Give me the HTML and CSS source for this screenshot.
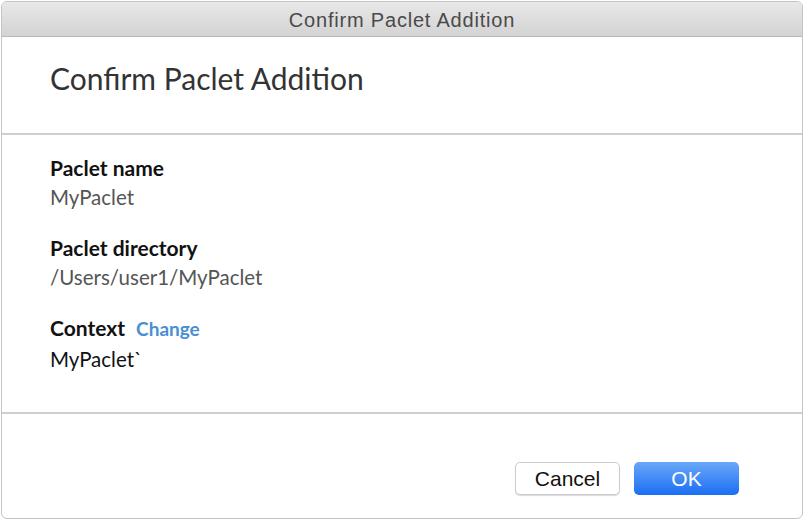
FILE: index.html
```html
<!DOCTYPE html>
<html lang="en">
<head>
  <meta charset="UTF-8">
  <meta name="viewport" content="width=device-width, initial-scale=1.0">
  <title>Confirm Paclet Addition</title>
  <link rel="stylesheet" href="styles.css">
</head>
<body>
  <div class="window">
    <!-- Barre de titre -->
    <div class="titlebar">Confirm Paclet Addition</div>

    <div class="header">
      <h1>Confirm Paclet Addition</h1>
    </div>

    <div class="content">
      <div class="field">
        <div class="label">Paclet name</div>
        <div class="value">MyPaclet</div>
      </div>
      <div class="field">
        <div class="label">Paclet directory</div>
        <div class="value">/Users/user1/MyPaclet</div>
      </div>
      <div class="field last">
        <div class="label">Context <a class="change" href="#">Change</a></div>
        <div class="value dark">MyPaclet`</div>
      </div>
    </div>

    <div class="footer">
      <button class="btn cancel">Cancel</button>
      <button class="btn ok">OK</button>
    </div>
  </div>
</body>
</html>
```

FILE: styles.css
```css
body {
  margin: 0;
  background-color: white;
  font-family: Lato, "Open Sans", sans-serif;
}

.window {
  width: 800px;
  height: 516px;
  margin-left: 1px;
  margin-top: 1px;
  border: 1.5px solid #c4c4c4;
  border-radius: 6px;
  overflow: hidden;
  display: flex;
  flex-direction: column;
}

.titlebar {
  height: 34px;
  line-height: 36px;
  text-align: center;
  font-family: "Liberation Sans", sans-serif;
  font-size: 20px;
  letter-spacing: 0.8px;
  color: #4a4a4a;
  background: linear-gradient(#e8e8e8, #d3d3d3);
  border-bottom: 1px solid #b9b9b9;
}

.header {
  height: 96px;
  border-bottom: 2px solid #cfcfcf;
  padding-left: 48px;
}

.header h1 {
  margin: 0;
  padding-top: 23px;
  font-size: 30px;
  font-weight: normal;
  color: #333;
}

.content {
  height: 279px;
  border-bottom: 2px solid #cfcfcf;
  padding-left: 48px;
  padding-top: 18px;
  box-sizing: border-box;
}

.field {
  margin-bottom: 21px;
}

.field.last {
  margin-top: 4px;
}

.field.last .value {
  line-height: 31px;
}

.label {
  font-size: 21px;
  font-weight: bold;
  color: #111;
  line-height: 30px;
}

.change {
  color: #4a8fd1;
  font-size: 19px;
  text-decoration: none;
  margin-left: 6px;
}

.value {
  font-size: 20.5px;
  color: #555;
  line-height: 29px;
}

.value.dark {
  color: #111;
}

.footer {
  flex: 1;
  display: flex;
  justify-content: flex-end;
  align-items: flex-end;
  gap: 14px;
  padding-right: 63px;
  padding-bottom: 23px;
}

.btn {
  font-family: "Liberation Sans", sans-serif;
  font-size: 21px;
  width: 105px;
  height: 33px;
  border-radius: 5px;
  cursor: pointer;
}

.cancel {
  background-color: white;
  color: #111;
  border: 1px solid #cdcdcd;
  box-shadow: 0 1px 1px rgba(0, 0, 0, 0.15);
}

.ok {
  color: white;
  border: none;
  background: linear-gradient(#6aa8f7, #1b6ef4);
}
```
